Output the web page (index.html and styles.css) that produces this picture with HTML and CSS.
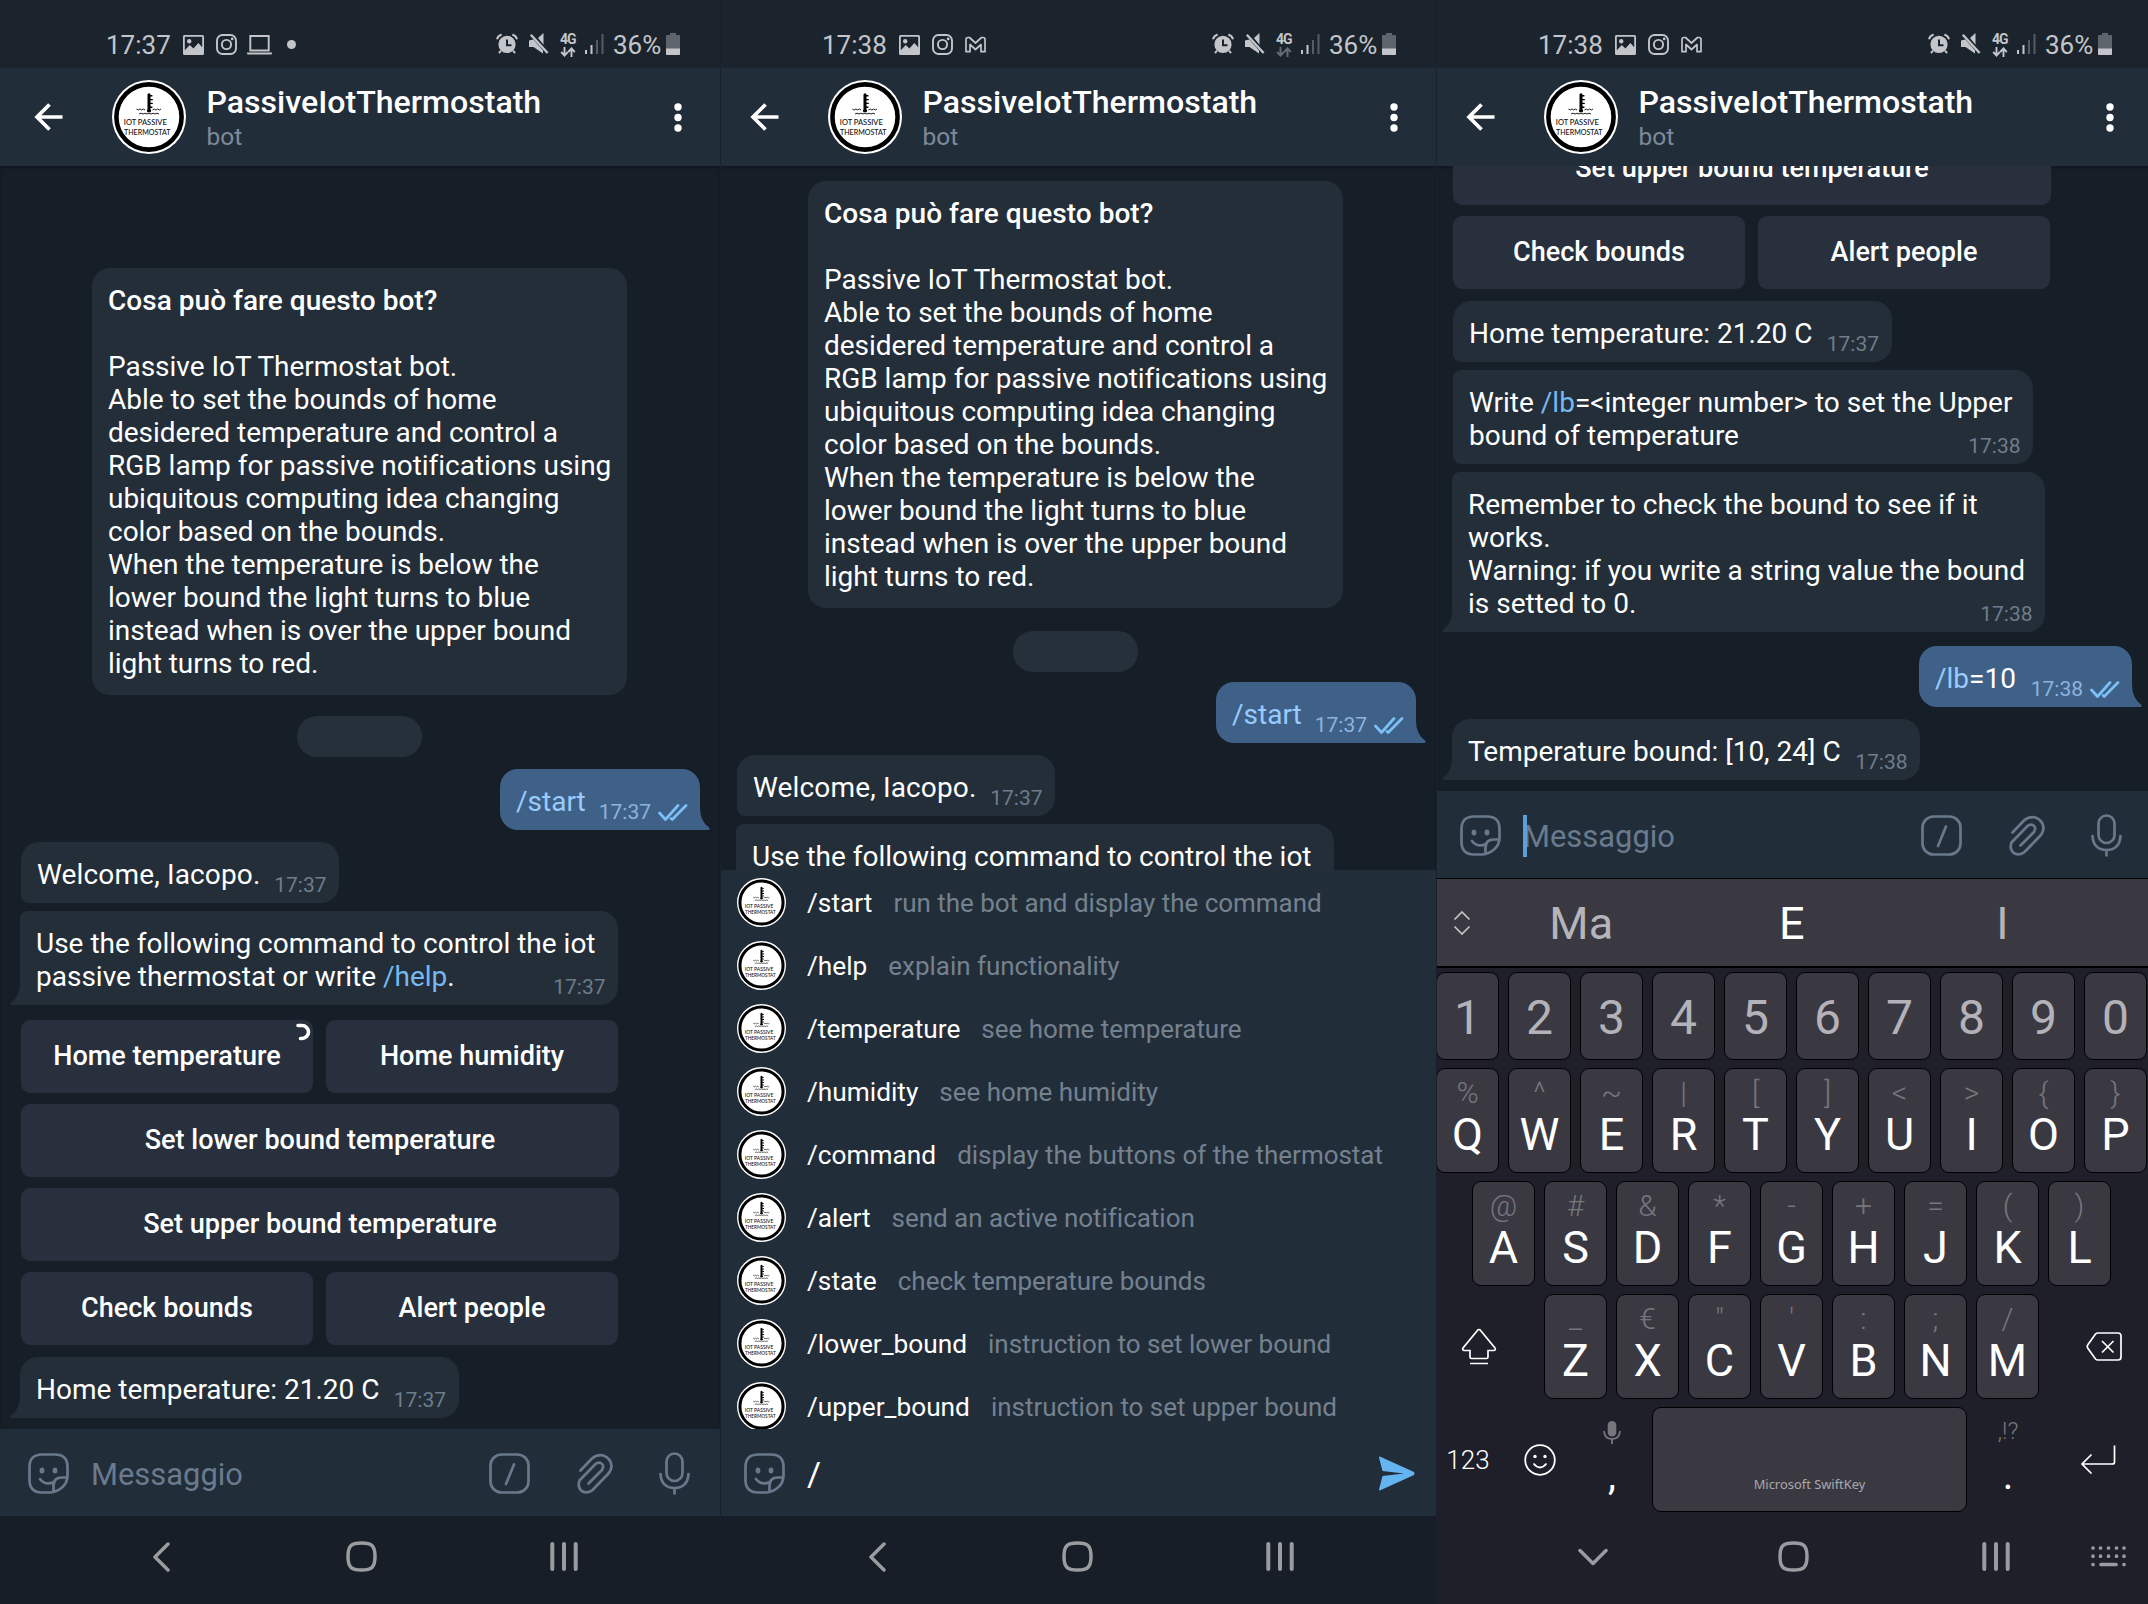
FILE: index.html
```html
<!DOCTYPE html>
<html lang="it">
<head>
<meta charset="utf-8">
<title>PassiveIotThermostath</title>
<link rel="stylesheet" href="styles.css">
</head>
<body>
<svg class="sprite" aria-hidden="true">
  <symbol id="logo" viewBox="0 0 74 74">
    <circle cx="37" cy="37" r="37" fill="#fff"/>
    <circle cx="37" cy="37" r="32.6" fill="#fff" stroke="#000" stroke-width="4.6"/>
    <path d="M35.500 14.500q1.500-2.400 3 0v14.800q1.400 1.600 0 2.900h-3q-1.200-1.400 0-2.900z" fill="#000"/>
    <path d="M38 15.800h2.400M38 19.600h2.800M38 23.400h2.800M38 27.200h2.400" stroke="#000" stroke-width="1.400"/>
    <path d="M24.500 29l1.700 1 1.700-1 1.700 1 1.700-1 1.700 1M40.500 30l1.700-1 1.700 1 1.700-1 1.700 1 1.700-1M27 34l2-.8 2 .8 2-.8 2 .8 2-.8 2 .8 2-.8 2 .8 2-.8 2 .8" fill="none" stroke="#222" stroke-width="1"/>
    <text x="11.800" y="44.800" textLength="43" lengthAdjust="spacingAndGlyphs" class="logo-text">IOT PASSIVE</text>
    <text x="12" y="54.500" textLength="46.500" lengthAdjust="spacingAndGlyphs" class="logo-text">THERMOSTAT</text>
  </symbol>
  <symbol id="back" viewBox="0 0 29 28"><path d="M28.500 14H3M15.500 1.500L3 14l12.500 12.500" fill="none" stroke="#fff" stroke-width="3.700"/></symbol>
  <symbol id="more" viewBox="0 0 8 29"><circle cx="4" cy="4" r="3.700"/><circle cx="4" cy="14.500" r="3.700"/><circle cx="4" cy="25" r="3.700"/></symbol>
  <symbol id="picture" viewBox="0 0 21 20"><path fill-rule="evenodd" d="M1.500 0h18Q21 0 21 1.500v17q0 1.500-1.500 1.500h-18Q0 20 0 18.500v-17Q0 0 1.500 0zM1.800 1.800v13.400l5-5.200 3.600 3.600 5-5.600 3.800 4.200V1.800z"/><circle cx="6.200" cy="6.200" r="2.200"/></symbol>
  <symbol id="camera" viewBox="0 0 21 21"><g fill="none" stroke="currentColor" stroke-width="1.900"><rect x="1" y="1" width="19" height="19" rx="5.500"/><circle cx="10.500" cy="10.500" r="4.600"/></g><circle cx="16.200" cy="4.900" r="1.400"/></symbol>
  <symbol id="laptop" viewBox="0 0 25 20"><path d="M3.300 1h18.400v14.500H3.300z" fill="none" stroke="currentColor" stroke-width="1.900"/><path d="M0 17.500h25v1q0 1-1 1H1q-1 0-1-1z"/></symbol>
  <symbol id="mail" viewBox="0 0 21 16"><path d="M1 15.200V3q0-2 2-2h1.500l6 5.500 6-5.500H18q2 0 2 2v12.200h-4V8l-5.500 5L5 8v7.200z" fill="none" stroke="currentColor" stroke-width="1.700" stroke-linejoin="round"/></symbol>
  <symbol id="alarm" viewBox="0 0 22 21"><path fill-rule="evenodd" d="M11 2.800a8.600 8.600 0 1 0 0 17.200 8.600 8.600 0 0 0 0-17.200zm-1 3.700h2v4.700h3.500v2H10z"/><path d="M1 6.200Q2 2.800 5.600 1.500M21 6.200Q20 2.800 16.400 1.500M5 17.500l-2 2.700M17 17.500l2 2.700" stroke="currentColor" stroke-width="2" fill="none"/></symbol>
  <symbol id="mute" viewBox="0 0 20 21"><path d="M9 5l5.500-5v12z"/><path d="M0 7.500v6.500h4.500l9.500 6.500v-7L6 6z"/><path d="M2.500 1.500l16.500 18.500" stroke="#1b242d" stroke-width="4"/><path d="M1.800 1.800l16.800 18.200" stroke="currentColor" stroke-width="2.400"/></symbol>
  <symbol id="arrows" viewBox="0 0 16 10"><path d="M4.500 0v8M1.200 5l3.300 3.500L7.800 5M11.500 10V2M8.200 5l3.300-3.500L14.800 5" fill="none" stroke="currentColor" stroke-width="1.900"/></symbol>
  <symbol id="signal" viewBox="0 0 19 21"><path d="M0 17h2v4H0zM5.500 12h2v9h-2z"/><path d="M11 7h2v14h-2zM16.500 1h2v20h-2z" opacity=".35"/></symbol>
  <symbol id="battery" viewBox="0 0 14 22"><path d="M4 0h6v2h3q1 0 1 1v18q0 1-1 1H1q-1 0-1-1V3q0-1 1-1h3z" opacity=".4"/><path d="M0 15.500h14V21q0 1-1 1H1q-1 0-1-1z"/></symbol>
  <symbol id="ticks" viewBox="0 0 30 17"><path d="M1.500 9l6 6.500L20 1.500M13 14.500l1.200 1L28 1.500" fill="none" stroke="#7cc0f7" stroke-width="2.700" stroke-linecap="round" stroke-linejoin="round"/></symbol>
  <symbol id="tail" viewBox="0 0 11 24"><path d="M11 0h-1Q10.500 15 1 21.500-.5 24 1.500 24H11z"/></symbol>
  <symbol id="sticker" viewBox="0 0 41 41"><g fill="none" stroke="currentColor" stroke-width="2.700" stroke-linecap="round"><path d="M14 1.500h13q12.500 0 12.500 12.500v8q0 8-5.500 12.500T22 39.500h-8Q1.500 39.500 1.500 27V14Q1.500 1.500 14 1.500z"/><path d="M39 24.500h-5q-8.500 0-8.500 8V39"/><path d="M12 26q5.500 7 14 3"/></g><ellipse cx="14" cy="17.500" rx="2.400" ry="3"/><ellipse cx="27" cy="17.500" rx="2.400" ry="3"/></symbol>
  <symbol id="slash" viewBox="0 0 41 41"><g fill="none" stroke="currentColor" stroke-width="2.700" stroke-linecap="round"><rect x="1.500" y="1.500" width="38" height="38" rx="11"/><path d="M25 11.500l-8 19.500"/></g></symbol>
  <symbol id="clip" viewBox="0 0 36 42"><path d="M3.500 17.500L15 5.500Q20 1 26.500 2.500 34 5.500 34.500 13q0 4-3.500 8L15.500 37q-4.500 4-10 1.500-5.500-4-3-11L18.500 11q3-2.500 6-.5t.5 6.500L11.500 30.500" fill="none" stroke="currentColor" stroke-width="2.700" stroke-linecap="round" stroke-linejoin="round"/></symbol>
  <symbol id="mic" viewBox="0 0 31 43"><g fill="none" stroke="currentColor" stroke-width="2.700" stroke-linecap="round"><rect x="7.500" y="1.500" width="16" height="27.500" rx="8"/><path d="M1.500 22q1 14 14 14t14-14M15.500 36v5.500"/></g></symbol>
  <symbol id="send" viewBox="0 0 36 35"><path d="M.8.600L34.500 15.800q2 1.700 0 3.400L.8 34.400Q0 34.500 0 33.500L3.500 20 25 17.500 3.500 15 0 1.500Q0 .500.800.600z" fill="#64b5ef"/></symbol>
  <symbol id="nav-back" viewBox="0 0 18 30"><path d="M16 2L3 15l13 13" fill="none" stroke="currentColor" stroke-width="3.500" stroke-linecap="round" stroke-linejoin="round"/></symbol>
  <symbol id="nav-down" viewBox="0 0 30 18"><path d="M2 2.500l13 13 13-13" fill="none" stroke="currentColor" stroke-width="3.500" stroke-linecap="round" stroke-linejoin="round"/></symbol>
  <symbol id="nav-home" viewBox="0 0 31 31"><path d="M15.500 2C26 2 29 5 29 15.500S26 29 15.500 29 2 26 2 15.500 5 2 15.500 2z" fill="none" stroke="currentColor" stroke-width="3.500"/></symbol>
  <symbol id="nav-recent" viewBox="0 0 28 29"><path d="M2.300 2v25M14 2v25M25.700 2v25" stroke="currentColor" stroke-width="4" stroke-linecap="round"/></symbol>
  <symbol id="nav-keys" viewBox="0 0 35 21"><path d="M2 2h.01M9.500 2h.01M17.500 2h.01M25.500 2h.01M33 2h.01M2 10.200h.01M9.500 10.200h.01M17.500 10.200h.01M25.500 10.200h.01M33 10.200h.01M2 18.500h.01M10 18.500h15M33 18.500h.01" stroke="currentColor" stroke-width="3.700" stroke-linecap="round"/></symbol>
  <symbol id="updown" viewBox="0 0 18 24"><path d="M1.500 8.500L9 1l7.500 7.500M1.500 15.500L9 23l7.500-7.500" fill="none" stroke="#c4c3c8" stroke-width="1.700"/></symbol>
  <symbol id="shift" viewBox="0 0 36 37"><path d="M18 1.500q1 0 1.600 1L34 20q1 2-1 2.500h-6V29q0 1.500-1.500 1.500h-15Q9 30.500 9 29v-6.500H3Q1 22 2 20L16.400 2.500q.6-1 1.600-1zM9 35.500h18" fill="none" stroke="#fff" stroke-width="1.700"/></symbol>
  <symbol id="erase" viewBox="0 0 36 29"><path d="M12 1h20q3 0 3 3v21q0 3-3 3H12q-1.500 0-2.500-1L2 16.500q-1.500-2 0-4L9.500 2q1-1 2.500-1zM16 9l11.500 11.500M27.500 9L16 20.500" fill="none" stroke="#fff" stroke-width="1.700"/></symbol>
  <symbol id="enter" viewBox="0 0 36 29"><path d="M34.500.5V17q0 2-2 2H2M11.500 9.500L2 19l9.500 9.500" fill="none" stroke="#fff" stroke-width="1.700"/></symbol>
  <symbol id="smile" viewBox="0 0 32 32"><circle cx="16" cy="16" r="14.800" fill="none" stroke="#fff" stroke-width="1.800"/><circle cx="11" cy="12.500" r="1.700" fill="#fff"/><circle cx="21" cy="12.500" r="1.700" fill="#fff"/><path d="M9.500 19.500q6.500 8 13 0" fill="none" stroke="#fff" stroke-width="1.800"/></symbol>
  <symbol id="dictate" viewBox="0 0 18 23"><rect x="4.700" y="0" width="8.600" height="15.500" rx="4.300"/><path d="M1 10q.5 8 8 8t8-8M9 18v5" fill="none" stroke="currentColor" stroke-width="1.800"/></symbol>
</svg>

<main class="board">
  <!-- First phone: welcome conversation -->
  <section class="phone phone-a"><div class="screen">
    <div class="status">
      <span class="clock">17:37</span>
      <svg class="i-picture"><use href="#picture"/></svg><svg class="i-camera"><use href="#camera"/></svg><svg class="i-laptop"><use href="#laptop"/></svg><i class="dot"></i>
      <div class="status-right"><svg class="i-alarm"><use href="#alarm"/></svg><svg class="i-mute"><use href="#mute"/></svg><span class="net"><b>4G</b><svg><use href="#arrows"/></svg></span><svg class="i-signal"><use href="#signal"/></svg><span class="percent">36%</span><svg class="i-battery"><use href="#battery"/></svg></div>
    </div>
    <header class="bar"><svg class="i-back"><use href="#back"/></svg><svg class="avatar"><use href="#logo"/></svg><div class="who"><h1>PassiveIotThermostath</h1><p>bot</p></div><svg class="i-more"><use href="#more"/></svg></header>
    <div class="chat from-bottom">
      <article class="card"><strong>Cosa può fare questo bot?</strong><br><br>Passive IoT Thermostat bot.<br>Able to set the bounds of home<br>desidered temperature and control a<br>RGB lamp for passive notifications using<br>ubiquitous computing idea changing<br>color based on the bounds.<br>When the temperature is below the<br>lower bound the light turns to blue<br>instead when is over the upper bound<br>light turns to red.</article>
      <div class="date"></div>
      <div class="bubble out w-start"><p><a>/start</a></p><span class="meta">17:37<svg><use href="#ticks"/></svg></span><svg class="tail"><use href="#tail"/></svg></div>
      <div class="bubble in first w-welcome"><p>Welcome, Iacopo.</p><span class="meta">17:37</span></div>
      <div class="bubble in last tailed w-use"><p>Use the following command to control the iot<br>passive thermostat or write <a>/help</a>.</p><span class="meta">17:37</span><svg class="tail"><use href="#tail"/></svg></div>
      <div class="buttons">
        <button class="half">Home temperature<svg class="spinner" viewBox="0 0 16 18"><path d="M2 2.500h4a6.500 6.500 0 0 1 0 13H4.500" fill="none" stroke="#fff" stroke-width="3.600" stroke-linecap="round"/></svg></button><button class="half">Home humidity</button>
        <button class="full">Set lower bound temperature</button>
        <button class="full">Set upper bound temperature</button>
        <button class="half">Check bounds</button><button class="half">Alert people</button>
      </div>
      <div class="bubble in tailed after-buttons w-home"><p>Home temperature: 21.20 C</p><span class="meta">17:37</span><svg class="tail"><use href="#tail"/></svg></div>
    </div>
    <div class="composer"><svg class="i-sticker"><use href="#sticker"/></svg><span class="placeholder">Messaggio</span><svg class="i-slash"><use href="#slash"/></svg><svg class="i-clip"><use href="#clip"/></svg><svg class="i-mic"><use href="#mic"/></svg></div>
    <nav class="nav"><svg class="n-back"><use href="#nav-back"/></svg><svg class="n-home"><use href="#nav-home"/></svg><svg class="n-recent"><use href="#nav-recent"/></svg></nav>
  </div></section>

  <!-- Second phone: command suggestions -->
  <section class="phone phone-b"><div class="screen">
    <div class="status">
      <span class="clock">17:38</span>
      <svg class="i-picture"><use href="#picture"/></svg><svg class="i-camera"><use href="#camera"/></svg><svg class="i-mail"><use href="#mail"/></svg>
      <div class="status-right"><svg class="i-alarm"><use href="#alarm"/></svg><svg class="i-mute"><use href="#mute"/></svg><span class="net idle"><b>4G</b><svg><use href="#arrows"/></svg></span><svg class="i-signal"><use href="#signal"/></svg><span class="percent">36%</span><svg class="i-battery"><use href="#battery"/></svg></div>
    </div>
    <header class="bar"><svg class="i-back"><use href="#back"/></svg><svg class="avatar"><use href="#logo"/></svg><div class="who"><h1>PassiveIotThermostath</h1><p>bot</p></div><svg class="i-more"><use href="#more"/></svg></header>
    <div class="chat from-top">
      <article class="card"><strong>Cosa può fare questo bot?</strong><br><br>Passive IoT Thermostat bot.<br>Able to set the bounds of home<br>desidered temperature and control a<br>RGB lamp for passive notifications using<br>ubiquitous computing idea changing<br>color based on the bounds.<br>When the temperature is below the<br>lower bound the light turns to blue<br>instead when is over the upper bound<br>light turns to red.</article>
      <div class="date"></div>
      <div class="bubble out w-start"><p><a>/start</a></p><span class="meta">17:37<svg><use href="#ticks"/></svg></span><svg class="tail"><use href="#tail"/></svg></div>
      <div class="bubble in first w-welcome"><p>Welcome, Iacopo.</p><span class="meta">17:37</span></div>
      <div class="bubble in last tailed w-use"><p>Use the following command to control the iot</p></div>
    </div>
    <ul class="commands">
      <li><svg><use href="#logo"/></svg><b>/start</b><span>run the bot and display the command</span></li>
      <li><svg><use href="#logo"/></svg><b>/help</b><span>explain functionality</span></li>
      <li><svg><use href="#logo"/></svg><b>/temperature</b><span>see home temperature</span></li>
      <li><svg><use href="#logo"/></svg><b>/humidity</b><span>see home humidity</span></li>
      <li><svg><use href="#logo"/></svg><b>/command</b><span>display the buttons of the thermostat</span></li>
      <li><svg><use href="#logo"/></svg><b>/alert</b><span>send an active notification</span></li>
      <li><svg><use href="#logo"/></svg><b>/state</b><span>check temperature bounds</span></li>
      <li><svg><use href="#logo"/></svg><b>/lower_bound</b><span>instruction to set lower bound</span></li>
      <li><svg><use href="#logo"/></svg><b>/upper_bound</b><span>instruction to set upper bound</span></li>
    </ul>
    <div class="composer"><svg class="i-sticker"><use href="#sticker"/></svg><span class="placeholder typed">/</span><svg class="i-send"><use href="#send"/></svg></div>
    <nav class="nav"><svg class="n-back"><use href="#nav-back"/></svg><svg class="n-home"><use href="#nav-home"/></svg><svg class="n-recent"><use href="#nav-recent"/></svg></nav>
  </div></section>

  <!-- Third phone: keyboard open -->
  <section class="phone phone-c"><div class="screen">
    <div class="status">
      <span class="clock">17:38</span>
      <svg class="i-picture"><use href="#picture"/></svg><svg class="i-camera"><use href="#camera"/></svg><svg class="i-mail"><use href="#mail"/></svg>
      <div class="status-right"><svg class="i-alarm"><use href="#alarm"/></svg><svg class="i-mute"><use href="#mute"/></svg><span class="net"><b>4G</b><svg><use href="#arrows"/></svg></span><svg class="i-signal"><use href="#signal"/></svg><span class="percent">36%</span><svg class="i-battery"><use href="#battery"/></svg></div>
    </div>
    <header class="bar"><svg class="i-back"><use href="#back"/></svg><svg class="avatar"><use href="#logo"/></svg><div class="who"><h1>PassiveIotThermostath</h1><p>bot</p></div><svg class="i-more"><use href="#more"/></svg></header>
    <div class="chat from-bottom">
      <div class="buttons">
        <button class="full">Set upper bound temperature</button>
        <button class="half">Check bounds</button><button class="half">Alert people</button>
      </div>
      <div class="bubble in first w-home"><p>Home temperature: 21.20 C</p><span class="meta">17:37</span></div>
      <div class="bubble in middle w-write"><p>Write <a>/lb</a>=&lt;integer number&gt; to set the Upper<br>bound of temperature</p><span class="meta">17:38</span></div>
      <div class="bubble in last tailed w-remember"><p>Remember to check the bound to see if it<br>works.<br>Warning: if you write a string value the bound<br>is setted to 0.</p><span class="meta">17:38</span><svg class="tail"><use href="#tail"/></svg></div>
      <div class="bubble out w-lb"><p><a>/lb</a>=10</p><span class="meta">17:38<svg><use href="#ticks"/></svg></span><svg class="tail"><use href="#tail"/></svg></div>
      <div class="bubble in tailed w-bound"><p>Temperature bound: [10, 24] C</p><span class="meta">17:38</span><svg class="tail"><use href="#tail"/></svg></div>
    </div>
    <div class="composer"><svg class="i-sticker"><use href="#sticker"/></svg><i class="caret"></i><span class="placeholder">Messaggio</span><svg class="i-slash"><use href="#slash"/></svg><svg class="i-clip"><use href="#clip"/></svg><svg class="i-mic"><use href="#mic"/></svg></div>
    <div class="suggest"><svg><use href="#updown"/></svg><span>Ma</span><span class="best">E</span><span>I</span></div>
    <div class="keyboard">
      <div class="keys digits"><kbd>1</kbd><kbd>2</kbd><kbd>3</kbd><kbd>4</kbd><kbd>5</kbd><kbd>6</kbd><kbd>7</kbd><kbd>8</kbd><kbd>9</kbd><kbd>0</kbd></div>
      <div class="keys"><kbd><small>%</small>Q</kbd><kbd><small>^</small>W</kbd><kbd><small>~</small>E</kbd><kbd><small>|</small>R</kbd><kbd><small>[</small>T</kbd><kbd><small>]</small>Y</kbd><kbd><small>&lt;</small>U</kbd><kbd><small>&gt;</small>I</kbd><kbd><small>{</small>O</kbd><kbd><small>}</small>P</kbd></div>
      <div class="keys"><kbd><small>@</small>A</kbd><kbd><small>#</small>S</kbd><kbd><small>&amp;</small>D</kbd><kbd><small>*</small>F</kbd><kbd><small>-</small>G</kbd><kbd><small>+</small>H</kbd><kbd><small>=</small>J</kbd><kbd><small>(</small>K</kbd><kbd><small>)</small>L</kbd></div>
      <div class="keys with-sides"><div class="side shift"><svg><use href="#shift"/></svg></div><kbd><small>_</small>Z</kbd><kbd><small>€</small>X</kbd><kbd><small>"</small>C</kbd><kbd><small>'</small>V</kbd><kbd><small>:</small>B</kbd><kbd><small>;</small>N</kbd><kbd><small>/</small>M</kbd><div class="side erase"><svg><use href="#erase"/></svg></div></div>
      <div class="keys bottom"><div class="cell numeric">123</div><div class="cell"><svg class="k-smile"><use href="#smile"/></svg></div><div class="cell punct"><svg class="k-mic"><use href="#dictate"/></svg><span>,</span></div><kbd class="space">Microsoft SwiftKey</kbd><div class="cell punct"><em>,!?</em><span>.</span></div><div class="cell wide"><svg class="k-enter"><use href="#enter"/></svg></div></div>
    </div>
    <nav class="nav"><svg class="n-down"><use href="#nav-down"/></svg><svg class="n-home"><use href="#nav-home"/></svg><svg class="n-recent"><use href="#nav-recent"/></svg><svg class="n-keys"><use href="#nav-keys"/></svg></nav>
  </div></section>
</main>
</body>
</html>
```
FILE: styles.css
```css
* { box-sizing: border-box; margin: 0; padding: 0; }
body { background: #161e27; font-family: Roboto, "Liberation Sans", sans-serif; color: #fff; overflow: hidden; }
svg { display: block; flex: none; fill: currentColor; }
.sprite { position: absolute; width: 0; height: 0; }
.logo-text { font: 500 8.2px Lato, sans-serif; fill: #111; }

.board { display: flex; width: 2148px; height: 1604px; overflow: hidden; }
.phone { flex: none; height: 1604px; overflow: hidden; }
.phone-a { width: 720px; }
.phone-b { width: 716px; border-left: 1px solid #18212b; }
.phone-c { width: 712px; border-left: 1px solid #18212b; }
.screen { display: flex; flex-direction: column; width: 720px; height: 1604px; }
.phone-b .screen, .phone-c .screen { margin-left: -5px; }

/* Status bar */
.status { display: flex; align-items: flex-start; height: 68px; padding: 29px 40px 0 106px; background: #1b242d; color: #c3c5ca; }
.clock, .percent { font-size: 26px; line-height: 32px; }
.clock { width: 77px; }
.i-picture { width: 21px; height: 20px; margin: 6px 12px 0 0; }
.i-camera { width: 21px; height: 21px; margin: 5px 10px 0 0; }
.i-laptop { width: 25px; height: 20px; margin: 6px 15px 0 0; }
.i-mail { width: 21px; height: 17px; margin: 7px 0 0 2px; }
.dot { width: 9px; height: 9px; margin-top: 11px; border-radius: 50%; background: #c3c5ca; }
.status-right { display: flex; margin-left: auto; }
.i-alarm { width: 22px; height: 21px; margin: 4px 11px 0 0; }
.i-mute { width: 20px; height: 21px; margin: 4px 11px 0 0; }
.net { display: flex; flex-direction: column; width: 16px; margin: 3px 9px 0 0; }
.net b { font-size: 14px; line-height: 14px; font-weight: 700; letter-spacing: -1px; }
.net svg { width: 16px; height: 10px; margin-top: 1px; }
.net.idle svg { opacity: .45; }
.i-signal { width: 19px; height: 21px; margin: 4px 9px 0 0; }
.percent { width: 53px; }
.i-battery { width: 14px; height: 22px; margin-top: 4px; }

/* Chat header */
.bar { display: flex; align-items: center; height: 98px; padding: 0 38px 0 34px; background: #222d3a; }
.i-back { width: 29px; height: 28px; margin-right: 49px; }
.avatar { width: 74px; height: 74px; margin-right: 20.5px; }
.who { flex: 1; }
.who h1 { font-size: 32.1px; line-height: 37px; font-weight: 500; }
.who p { padding-top: 1px; font-size: 24.5px; line-height: 29px; color: #7e8a98; }
.i-more { width: 8px; height: 29px; }

/* Conversation */
.chat { display: flex; flex-direction: column; flex: 1; min-height: 0; overflow: hidden; background: #161e27; font-size: 28px; line-height: 33px; box-shadow: inset 0 2px 2px #121921; }
.chat > * { flex: none; }
.from-bottom { justify-content: flex-end; padding-bottom: 11px; }
.from-top { padding-top: 15px; }
.phone-b .chat { flex: none; height: 704px; }
.card { width: 535px; height: 427px; margin-left: 92px; padding: 16px 0 0 16px; border-radius: 18px; background: #232e39; letter-spacing: -.03px; white-space: nowrap; }
.card strong { font-weight: 500; letter-spacing: .03px; }
.date { width: 125px; height: 41px; margin: 21px 0 12px 297px; border-radius: 20px; background: #25303b; }
.phone-b .date { margin-top: 23px; margin-bottom: 10px; }
.bubble { position: relative; display: grid; padding: 16px 12.500px 12px 16px; border-radius: 18px; white-space: nowrap; }
.bubble p, .meta { grid-area: 1 / 1; }
.meta { display: flex; align-items: center; justify-self: end; align-self: end; margin-bottom: -6px; font-size: 21px; line-height: 24px; }
.meta svg { width: 30px; height: 17px; margin: 0 0 0 7px; }
.in { align-self: flex-start; margin-left: 21px; background: #232e39; }
.in .meta { color: #6f7c89; }
.in a { color: #75b9f0; }
.in.first { border-bottom-left-radius: 8px; margin-top: 12px; }
.in.middle { border-top-left-radius: 8px; border-bottom-left-radius: 8px; margin-top: 8px; }
.in.last { border-top-left-radius: 8px; margin-top: 8px; }
.in.tailed { border-bottom-left-radius: 0; margin-left: 20px; }
.in.after-buttons, .in.w-bound { margin-top: 12px; }
.out { align-self: flex-end; margin-right: 20px; padding-right: 12px; border-bottom-right-radius: 0; background: #3f6188; }
.out a { color: #98cbff; }
.out .meta { color: #8db4de; }
.tail { position: absolute; bottom: 0; left: -10px; width: 11px; height: 24px; color: #232e39; }
.out .tail { left: auto; right: -10px; color: #3f6188; transform: scaleX(-1); }
.w-start { width: 200px; }
.w-welcome { width: 318px; }
.w-welcome p { letter-spacing: .15px; }
.w-use { width: 598px; }
.w-home { width: 438.500px; }
.w-write { width: 580px; }
.w-remember { width: 593px; }
.w-lb { width: 213px; margin-top: 14px; }
.w-bound { width: 468px; }

.buttons { display: flex; flex-wrap: wrap; gap: 11px 13px; width: 598px; margin: 15px 0 0 21px; }
.buttons button { position: relative; height: 73px; padding-bottom: 2px; border: 0; border-radius: 9px; background: #27303c; color: #fff; font: 500 27.050px Roboto, sans-serif; }
.half { width: 292px; }
.full { width: 598px; }
.spinner { position: absolute; top: 3px; right: 1px; width: 16px; height: 18px; }

/* Message field */
.composer { display: flex; align-items: center; height: 87px; padding: 2px 30px 0 28px; background: #222d3a; color: #69798c; }
.i-sticker { width: 41px; height: 41px; margin-right: 22px; }
.placeholder { flex: 1; padding-top: 1px; font-size: 30.900px; line-height: 37px; color: #697b8e; }
.typed { color: #fff; font-size: 34px; }
.caret { position: absolute; width: 4px; height: 42px; margin-left: 63px; background: #5c9fd8; }
.i-slash { width: 41px; height: 41px; margin-right: 47px; }
.i-clip { width: 36px; height: 42px; margin-right: 46px; }
.i-mic { width: 31px; height: 43px; }
.i-send { width: 36px; height: 35px; margin-right: -9px; }

/* Command suggestions */
.commands { height: 559px; padding-top: 1px; overflow: hidden; list-style: none; background: #222d3a; font-size: 26.25px; }
.commands li { display: flex; align-items: center; height: 63px; padding-left: 21px; white-space: nowrap; }
.commands svg { width: 49px; height: 49px; margin-right: 21px; }
.commands b { margin-right: 21px; font-weight: 400; }
.commands span { color: #74818e; font-size: 26px; letter-spacing: -.03px; }

/* Android navigation */
.nav { display: flex; align-items: center; height: 88px; padding-bottom: 7px; background: #171e27; color: #9a9ca0; }
.n-back { width: 18px; height: 30px; margin: 0 176.500px 0 151.500px; }
.n-home { width: 31px; height: 31px; margin-right: 172.500px; }
.n-recent { width: 28px; height: 29px; }
.n-down { width: 30px; height: 18px; margin: 0 170px 0 146px; }
.n-keys { width: 35px; height: 21px; margin-left: 81px; }
.phone-c .nav { background: #1e1f28; }

/* Keyboard */
.suggest { display: grid; grid-template-columns: 44px 210.500px 210.500px 210.500px; align-items: center; height: 90px; border-top: 1px solid #000; border-bottom: 2px solid #000; background: #3a3942; color: #b5b4ba; font-size: 45px; text-align: center; }
.suggest svg { width: 18px; height: 24px; margin-left: 21px; }
.suggest span { padding-top: 1px; }
.suggest .best { color: #fff; }
.keyboard { display: flex; flex-direction: column; gap: 8px; height: 548px; padding: 4px 1px 0 0; background: #1e1f28; }
.keys { display: flex; flex: none; justify-content: center; gap: 9px; height: 105px; }
kbd { display: flex; flex-direction: column; align-items: center; flex: none; width: 63px; height: 100%; padding-top: 8px; border: 1px solid #000; border-radius: 9px; background: #3a3942; color: #fff; font: 400 45px/45px Roboto, sans-serif; }
kbd small { height: 30px; margin-bottom: 5px; padding-top: 1px; color: #77767d; font-size: 30px; line-height: 30px; font-weight: 300; }
.digits { height: 88px; }
.digits kbd { justify-content: center; padding-top: 3px; color: #b3b2b8; font-size: 48px; }
.side { display: flex; align-items: center; width: 103px; }
.side svg { width: 36px; height: 37px; margin-left: 29px; }
.side.erase svg { height: 29px; margin-left: 38px; }
.bottom { gap: 0; justify-content: flex-start; }
.cell { display: flex; align-items: center; justify-content: center; flex: none; width: 72px; }
.numeric { padding-top: 1px; font-size: 26px; font-weight: 300; }
.k-smile { width: 32px; height: 32px; }
.punct { flex-direction: column; justify-content: flex-start; height: 100%; color: #77767d; }
.k-mic { width: 18px; height: 23px; margin-top: 14px; }
.punct em { margin-top: 12px; font-size: 24px; line-height: 25px; font-style: normal; font-weight: 300; }
.punct span { margin-top: 12px; color: #fff; font-size: 40px; line-height: 40px; }
.space { width: 315px; margin: 0 5px 0 4px; justify-content: flex-end; padding-bottom: 17px; color: #a9a8ad; font: 400 12.900px/20px "Noto Sans", sans-serif; }
.wide { width: 108px; }
.k-enter { width: 36px; height: 29px; }
```
